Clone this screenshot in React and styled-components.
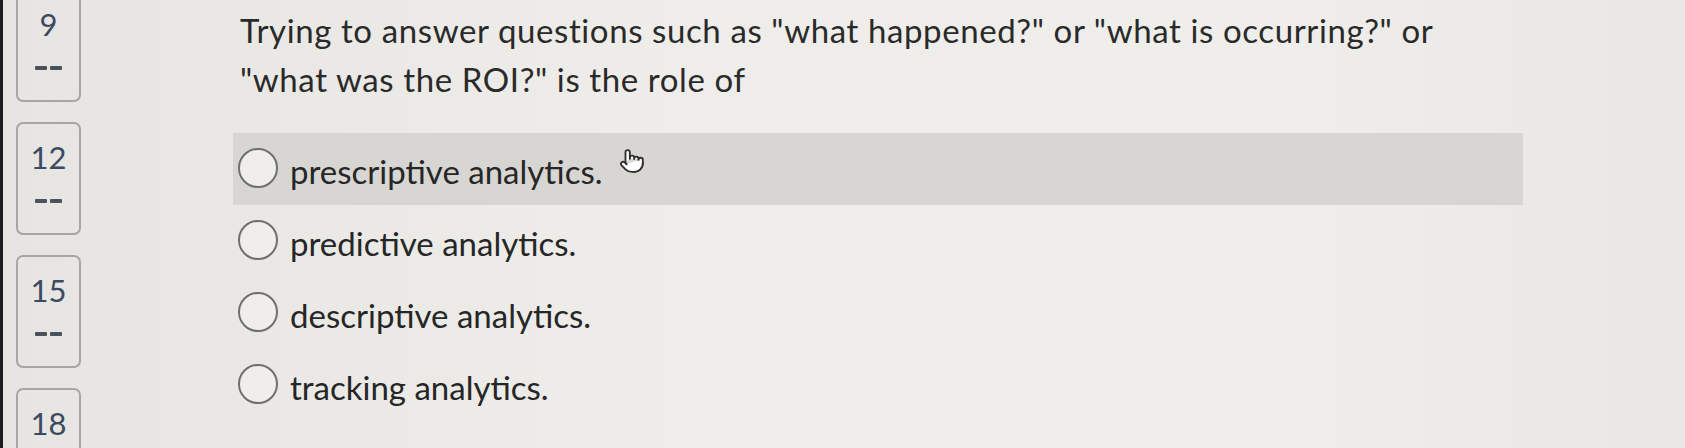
import React from "react";
import styled, { createGlobalStyle } from "styled-components";
import { Pointer } from "lucide-react";

const GlobalStyle = createGlobalStyle`
  html, body {
    margin: 0;
    padding: 0;
    background: #ebeae7;
    font-family: Lato, "Open Sans", sans-serif;
    overflow: hidden;
  }
`;

const Page = styled.div`
  width: 1685px;
  height: 448px;
  display: flex;
  background: linear-gradient(90deg, #e6e5e2 0%, #eeedea 40%, #efeeeb 75%, #e8e7e4 100%);
  border-left: 3px solid #1d1d1d;
  box-sizing: border-box;
  overflow: hidden;
`;

const Sidebar = styled.nav`
  width: 230px;
  flex: none;
  box-sizing: border-box;
  display: flex;
  flex-direction: column;
  gap: 20px;
  padding-left: 13px;
  margin-top: -11px;
`;

const QBox = styled.div`
  width: 65px;
  height: 113px;
  flex: none;
  box-sizing: border-box;
  border: 2px solid #a6a6a4;
  border-radius: 7px;
  display: flex;
  flex-direction: column;
  align-items: center;
  padding-top: 18px;
  color: #3b4a61;
`;

const QNum = styled.div`
  font-size: 31px;
  line-height: 31px;
`;

const QDash = styled.div`
  margin-top: 26px;
  display: flex;
  gap: 3px;

  &::before,
  &::after {
    content: "";
    width: 12px;
    height: 4px;
    border-radius: 1px;
    background: #4b525d;
  }
`;

const Main = styled.main`
  flex: 1;
  display: flex;
  flex-direction: column;
  padding-top: 6px;
`;

const Question = styled.p`
  margin: 0 0 29px 7px;
  width: 1260px;
  font-size: 33px;
  letter-spacing: 0.6px;
  line-height: 49px;
  color: #2a2a2a;
`;

const Options = styled.div`
  display: flex;
  flex-direction: column;
`;

const Option = styled.label`
  width: 1290px;
  height: 72px;
  display: flex;
  align-items: center;
  gap: 12px;
  padding-left: 5px;
  box-sizing: border-box;
  background: ${(p) => (p.$hover ? "#d7d6d3" : "transparent")};
  color: #262626;
  font-size: 33px;
`;

const Radio = styled.span`
  width: 40px;
  height: 40px;
  flex: none;
  border-radius: 50%;
  border: 2px solid #6f6f6f;
  box-sizing: border-box;
  background: #efeeeb;
  margin-top: -2px;
`;

const OptText = styled.span`
  padding-top: 4px;
`;

const Cursor = styled.span`
  display: inline-flex;
  margin-left: 5px;
  margin-top: -16px;
  color: #2e2e2e;
`;

const nums = ["9", "12", "15", "18"];
const opts = [
  "prescriptive analytics.",
  "predictive analytics.",
  "descriptive analytics.",
  "tracking analytics.",
];

export default function App() {
  return (
    <>
      <GlobalStyle />
      <Page>
        <Sidebar>
          {nums.map((n) => (
            <QBox key={n}>
              <QNum>{n}</QNum>
              <QDash />
            </QBox>
          ))}
        </Sidebar>
        <Main>
          <Question>
            Trying to answer questions such as "what happened?" or "what is occurring?" or "what was the ROI?" is the role of
          </Question>
          <Options>
            {opts.map((o, i) => (
              <Option key={o} $hover={i === 0}>
                <Radio />
                <OptText>{o}</OptText>
                {i === 0 && (
                  <Cursor>
                    <Pointer size={26} strokeWidth={1.7} fill="#fff" />
                  </Cursor>
                )}
              </Option>
            ))}
          </Options>
        </Main>
      </Page>
    </>
  );
}
